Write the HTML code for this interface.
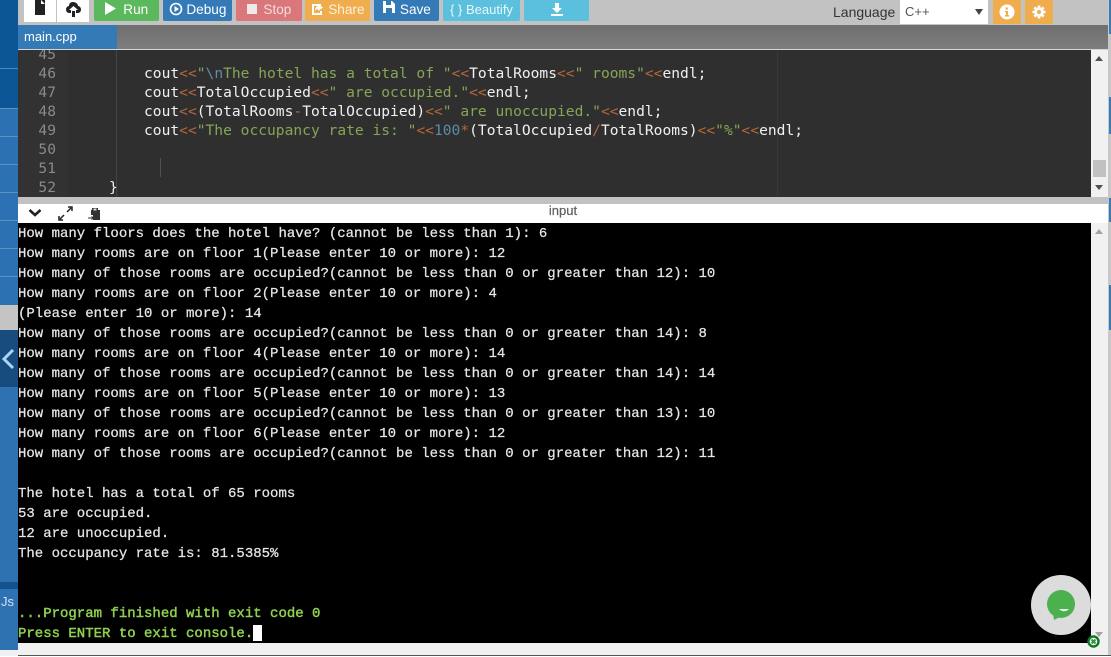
<!DOCTYPE html>
<html><head><meta charset="utf-8"><style>
html,body{margin:0;padding:0;width:1111px;height:657px;overflow:hidden;background:#f1f1f1;font-family:"Liberation Sans",sans-serif}
.a{position:absolute}
.btn{position:absolute;top:0;height:21px;color:#fff;font-size:13.6px;line-height:19px;text-align:center;white-space:nowrap;border-radius:0 0 2px 2px}
.c{position:absolute;left:144px;font:14.6px/19px "DejaVu Sans Mono",monospace;color:#f0f0f0;white-space:pre}
.n{position:absolute;left:18px;width:38px;text-align:right;font:14.6px/19px "DejaVu Sans Mono",monospace;color:#8a8a8a}
.o{color:#b5683a}.s{color:#87a556}.e{color:#5c8cab}
#t{position:absolute;left:18px;top:223px;width:1073px;height:419px;padding-top:1px;background:#000;color:#e6e6e6;font:14px/20px "Liberation Mono",monospace;-webkit-text-stroke:0.25px #e6e6e6;white-space:pre;overflow:hidden}
#t b{color:#8fd14f;font-weight:normal;-webkit-text-stroke:0.45px #8fd14f}
</style></head><body>
<!-- sidebar -->
<div class="a" style="left:0;top:0;width:18px;height:108px;background:#0d5696"></div>
<div class="a" style="left:0;top:68px;width:18px;height:1px;background:#4f88bb"></div>
<div class="a" style="left:0;top:108px;width:18px;height:197px;background:#2c72b3"></div>
<div class="a" style="left:0;top:108px;width:18px;height:1px;background:#5a92c4"></div>
<div class="a" style="left:0;top:136px;width:18px;height:1px;background:#5a92c4"></div>
<div class="a" style="left:0;top:164px;width:18px;height:1px;background:#5a92c4"></div>
<div class="a" style="left:0;top:192px;width:18px;height:1px;background:#5a92c4"></div>
<div class="a" style="left:0;top:220px;width:18px;height:1px;background:#5a92c4"></div>
<div class="a" style="left:0;top:248px;width:18px;height:1px;background:#5a92c4"></div>
<div class="a" style="left:0;top:276px;width:18px;height:1px;background:#5a92c4"></div>
<div class="a" style="left:0;top:305px;width:18px;height:25px;background:#c4c4c4"></div>
<div class="a" style="left:0;top:330px;width:18px;height:57px;background:#164c7e"></div>
<svg class="a" style="left:0;top:345px" width="18" height="28"><path d="M13 5 L4 14 L13 23" fill="none" stroke="#a8d6f5" stroke-width="3"/></svg>
<div class="a" style="left:0;top:387px;width:18px;height:263px;background:#2f72b2"></div>
<div class="a" style="left:0;top:582px;width:18px;height:7px;background:#14528d"></div>
<div class="a" style="left:1px;top:595px;font-size:13px;line-height:14px;color:#cfe2f3">Js</div>

<!-- toolbar -->
<div class="a" style="left:18px;top:0;width:1090px;height:25px;background:#c2c2c2"></div>
<div class="a" style="left:24px;top:0;width:32px;height:22px;background:#fff"></div>
<div class="a" style="left:57px;top:0;width:32px;height:22px;background:#fff"></div>
<svg class="a" style="left:34px;top:0" width="12" height="17"><path d="M1 0H11V15H1Z" fill="#222"/><path d="M7 0L11 4H7Z" fill="#fff"/></svg>
<svg class="a" style="left:65px;top:1" width="17" height="17"><path d="M8 1C5 1 4 3 4 5C2 5 1 7 1 8.500C1 10 2 12 4 12H6V9H4L8.500 5L13 9H11V12H13C15 12 16 10 16 8.500C16 7 15 5 13 5C13 3 11 1 8 1Z" fill="#222"/><path d="M7 10H10V16H7Z" fill="#222"/></svg>
<div class="btn" style="left:94px;width:65px;background:#5cb85c"><svg width="11" height="13" style="vertical-align:-1px"><path d="M0 0L11 6.500L0 13Z" fill="#fff"/></svg>&nbsp; Run</div>
<div class="btn" style="left:163px;width:69px;background:#337ab7"><svg width="14" height="14" style="vertical-align:-2px"><circle cx="7" cy="7" r="5.500" fill="none" stroke="#fff" stroke-width="1.600"/><path d="M5.500 4L10 7L5.500 10Z" fill="#fff"/></svg> Debug</div>
<div class="btn" style="left:236px;width:66px;background:#d9777a;color:#f2dcdc"><span style="display:inline-block;width:10px;height:10px;background:#eeeaea;margin-right:3px"></span> Stop</div>
<div class="btn" style="left:305px;width:65px;background:#f0ad4e;color:#fdf1df"><svg width="14" height="14" style="vertical-align:-2px"><path d="M11 3H3V12H11V9" fill="none" stroke="#fff" stroke-width="2"/><path d="M8 2L13 5.500L8 9V7C6.500 7 5.500 8 5 9C5 6 6.500 4.500 8 4Z" fill="#fff"/></svg> Share</div>
<div class="btn" style="left:374px;width:65px;background:#337ab7"><svg width="14" height="14" style="vertical-align:0"><path d="M1 1H10L13 4V13H1Z" fill="#fff"/><path d="M4 1H9V5H4Z" fill="#337ab7"/><path d="M4 8H10V13H4Z" fill="#337ab7"/></svg> Save</div>
<div class="btn" style="left:443px;width:77px;background:#5bc0de;color:#eaf7fb;font-size:13px">{ } Beautify</div>
<div class="btn" style="left:524px;width:65px;background:#5bc0de"><svg width="16" height="15" style="margin-top:2px"><path d="M6 1H10V6H13L8 11L3 6H6Z" fill="#fff"/><path d="M2 12H14V14H2Z" fill="#fff"/></svg></div>
<div class="a" style="left:833px;top:4px;font-size:14px;line-height:16px;color:#333">Language</div>
<div class="a" style="left:900px;top:0;width:88px;height:24px;background:#fff;font-size:13px;line-height:24px;color:#555;text-indent:5px">C++</div>
<svg class="a" style="left:975px;top:9px" width="8" height="7"><path d="M0 0H8L4 6Z" fill="#444"/></svg>
<div class="a" style="left:993px;top:0;width:28px;height:24px;background:#f0ad4e"></div>
<svg class="a" style="left:999px;top:4px" width="16" height="16"><circle cx="8" cy="8" r="7.500" fill="#fff"/><path d="M6.500 3.500H9V5.500H6.500ZM6 7H9V11H10V12.500H6V11H7V8.500H6Z" fill="#f0ad4e"/></svg>
<div class="a" style="left:1025px;top:0;width:28px;height:24px;background:#f0ad4e"></div>
<svg class="a" style="left:1031px;top:4px" width="16" height="16"><path d="M8 1.500V14.500M1.500 8H14.500M3.400 3.400L12.600 12.600M12.600 3.400L3.400 12.600" stroke="#fff" stroke-width="2.600"/><circle cx="8" cy="8" r="4.800" fill="#fff"/><circle cx="8" cy="8" r="2" fill="#f0ad4e"/></svg>

<!-- tab bar -->
<div class="a" style="left:18px;top:25px;width:1090px;height:24px;background:linear-gradient(#6f6f6f,#7d7d7d)"></div>
<div class="a" style="left:18px;top:25px;width:99px;height:24px;background:#337ab7;color:#fff;font-size:13px;line-height:24px;text-indent:6px">main.cpp</div>
<div class="a" style="left:18px;top:49px;width:1090px;height:1px;background:#d5d5d5"></div>

<!-- editor -->
<div class="a" style="left:18px;top:50px;width:1073px;height:147px;background:#2f2f2f;overflow:hidden">
<div class="a" style="left:0;top:0;width:50px;height:147px;background:#323232"></div>
<div class="a" style="left:98px;top:0;width:1px;height:147px;background:#444"></div>
<div class="a" style="left:142px;top:108px;width:1px;height:19px;background:#505050"></div>
<div class="a" style="left:759px;top:0;width:1px;height:147px;background:#383838"></div>
<div class="n" style="top:-5px;left:0">45</div>
<div class="n" style="top:13.500px;left:0">46</div>
<div class="n" style="top:32.500px;left:0">47</div>
<div class="n" style="top:51.500px;left:0">48</div>
<div class="n" style="top:70.500px;left:0">49</div>
<div class="n" style="top:89.500px;left:0">50</div>
<div class="n" style="top:108.500px;left:0">51</div>
<div class="n" style="top:127.500px;left:0">52</div>
<div class="c" style="left:126px;top:13.500px">cout<span class="o">&lt;&lt;</span><span class="s">"</span><span class="e">\n</span><span class="s">The hotel has a total of "</span><span class="o">&lt;&lt;</span>TotalRooms<span class="o">&lt;&lt;</span><span class="s">" rooms"</span><span class="o">&lt;&lt;</span>endl;</div>
<div class="c" style="left:126px;top:32.500px">cout<span class="o">&lt;&lt;</span>TotalOccupied<span class="o">&lt;&lt;</span><span class="s">" are occupied."</span><span class="o">&lt;&lt;</span>endl;</div>
<div class="c" style="left:126px;top:51.500px">cout<span class="o">&lt;&lt;</span>(TotalRooms<span class="o">-</span>TotalOccupied)<span class="o">&lt;&lt;</span><span class="s">" are unoccupied."</span><span class="o">&lt;&lt;</span>endl;</div>
<div class="c" style="left:126px;top:70.500px">cout<span class="o">&lt;&lt;</span><span class="s">"The occupancy rate is: "</span><span class="o">&lt;&lt;</span><span class="e">100</span><span class="o">*</span>(TotalOccupied<span class="o">/</span>TotalRooms)<span class="o">&lt;&lt;</span><span class="s">"%"</span><span class="o">&lt;&lt;</span>endl;</div>
<div class="c" style="left:91px;top:127.500px">}</div>
</div>

<!-- editor scrollbar -->
<div class="a" style="left:1091px;top:50px;width:17px;height:147px;background:#f1f1f1"></div>
<svg class="a" style="left:1095px;top:56px" width="9" height="6"><path d="M0 5H8L4 0Z" fill="#505050"/></svg>
<div class="a" style="left:1093px;top:160px;width:13px;height:17px;background:#c1c1c1"></div>
<svg class="a" style="left:1095px;top:185px" width="9" height="6"><path d="M0 0H8L4 5Z" fill="#505050"/></svg>

<!-- divider + terminal header -->
<div class="a" style="left:18px;top:197px;width:1090px;height:7px;background:#c2c2c2"></div>
<div class="a" style="left:18px;top:204px;width:1090px;height:19px;background:#fff"></div>
<svg class="a" style="left:28px;top:208px" width="14" height="10"><path d="M1.500 2L7 7L12.500 2" fill="none" stroke="#222" stroke-width="2.600"/></svg>
<svg class="a" style="left:58px;top:206px" width="15" height="15"><path d="M9 6L13 2M10 1H14V5M6 9L2 13M1 10V14H5" fill="none" stroke="#222" stroke-width="1.500"/></svg>
<svg class="a" style="left:88px;top:207px" width="14" height="14"><path d="M4 1H10V3H12V13H5V8H3V3H4Z" fill="#333"/><path d="M5.500 1.500H8.500V3.500H5.500Z" fill="#ddd"/><path d="M0 11H5M3.500 9.500L5.500 11L3.500 12.500" stroke="#333" fill="none"/></svg>
<div class="a" style="left:463px;width:200px;top:203px;text-align:center;font-size:13px;line-height:16px;color:#5f5f5f;-webkit-text-stroke:0.2px #5f5f5f">input</div>

<!-- terminal -->
<div id="t">How many floors does the hotel have? (cannot be less than 1): 6
How many rooms are on floor 1(Please enter 10 or more): 12
How many of those rooms are occupied?(cannot be less than 0 or greater than 12): 10
How many rooms are on floor 2(Please enter 10 or more): 4
(Please enter 10 or more): 14
How many of those rooms are occupied?(cannot be less than 0 or greater than 14): 8
How many rooms are on floor 4(Please enter 10 or more): 14
How many of those rooms are occupied?(cannot be less than 0 or greater than 14): 14
How many rooms are on floor 5(Please enter 10 or more): 13
How many of those rooms are occupied?(cannot be less than 0 or greater than 13): 10
How many rooms are on floor 6(Please enter 10 or more): 12
How many of those rooms are occupied?(cannot be less than 0 or greater than 12): 11

The hotel has a total of 65 rooms
53 are occupied.
12 are unoccupied.
The occupancy rate is: 81.5385%


<b>...Program finished with exit code 0
Press ENTER to exit console.</b></div>
<div class="a" style="left:253px;top:625px;width:9px;height:16px;background:#fff"></div>

<!-- terminal scrollbar -->
<div class="a" style="left:1091px;top:223px;width:17px;height:420px;background:#f1f1f1"></div>
<svg class="a" style="left:1095px;top:229px" width="9" height="6"><path d="M0 5H8L4 0Z" fill="#a3a3a3"/></svg>
<svg class="a" style="left:1095px;top:632px" width="9" height="6"><path d="M0 0H8L4 5Z" fill="#a3a3a3"/></svg>

<!-- right edge -->
<div class="a" style="left:1108px;top:0;width:3px;height:657px;background:#c8c8c8"></div>
<div class="a" style="left:1109px;top:0;width:2px;height:34px;background:#3a7ab5"></div>
<div class="a" style="left:1109px;top:97px;width:2px;height:37px;background:#3a7ab5"></div>
<div class="a" style="left:1109px;top:198px;width:2px;height:24px;background:#3a7ab5"></div>
<div class="a" style="left:1109px;top:285px;width:2px;height:45px;background:#3a7ab5"></div>

<!-- bottom -->
<div class="a" style="left:18px;top:655px;width:1093px;height:1px;background:#555"></div>
<div class="a" style="left:0;top:656px;width:1111px;height:1px;background:#fff"></div>

<!-- chat widget -->
<div class="a" style="left:1031px;top:575px;width:60px;height:60px;border-radius:50%;background:#dcdcdc"></div>
<svg class="a" style="left:1045px;top:589px" width="32" height="32"><circle cx="16" cy="15" r="14" fill="#4bb14f"/><path d="M8 24L9 31L17 27Z" fill="#4bb14f"/><path d="M14 20C17 23 21 23 24 20Z" fill="#e8f5e8"/></svg>
<svg class="a" style="left:1087px;top:635px" width="13" height="13"><circle cx="6.500" cy="6.500" r="5" fill="#fff" stroke="#0e7a22" stroke-width="2.400"/><path d="M4.500 4.500L8.500 8.500M8.500 4.500L4.500 8.500" stroke="#3c8a4c" stroke-width="2"/></svg>
</body></html>
